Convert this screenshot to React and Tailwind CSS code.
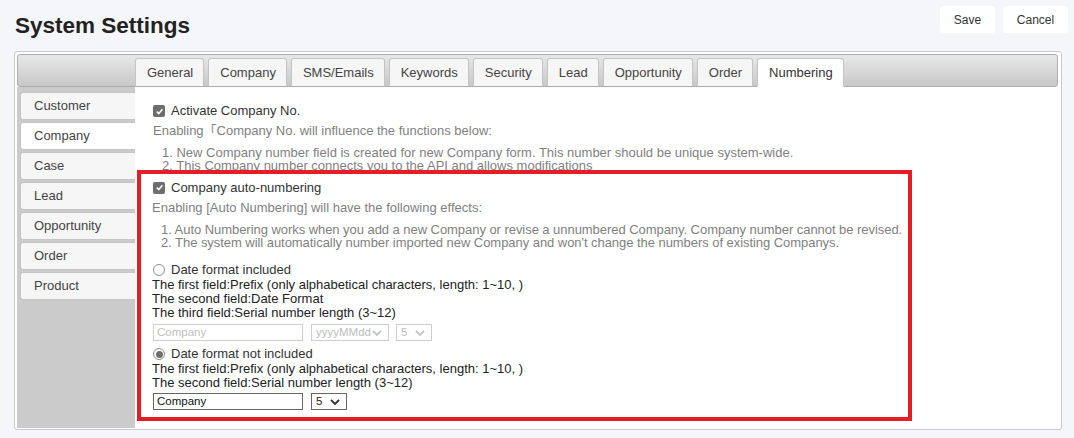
import React from "react";

const tabs = ["General", "Company", "SMS/Emails", "Keywords", "Security", "Lead", "Opportunity", "Order", "Numbering"];
const sideItems = ["Customer", "Company", "Case", "Lead", "Opportunity", "Order", "Product"];

const CheckBox = () => (
  <span className="flex h-[12px] w-[12px] items-center justify-center rounded-[2px] bg-[#6e6e6e]">
    <svg width="9" height="9" viewBox="0 0 10 10">
      <polyline points="2,5.2 4.2,7.4 8.2,2.6" fill="none" stroke="#fff" strokeWidth="1.8" />
    </svg>
  </span>
);

const Radio = ({ checked }) => (
  <span className="flex h-[12px] w-[12px] items-center justify-center rounded-full border border-[#8d8d8d] bg-white">
    {checked && <span className="h-[7px] w-[7px] rounded-full bg-[#6e6e6e]" />}
  </span>
);

const Chevron = ({ color }) => (
  <svg width="10" height="6" viewBox="0 0 10 6">
    <polyline points="1,1 5,5 9,1" fill="none" stroke={color} strokeWidth="1.8" />
  </svg>
);

const Select = ({ value, width, disabled }) => (
  <div
    className={`flex h-[17px] items-center justify-between border pl-[4px] pr-[6px] text-[11.5px] ${width} ${
      disabled ? "border-[#cfcfcf] text-[#bdbdbd]" : "border-[#666] text-[#222]"
    }`}
  >
    <span>{value}</span>
    <Chevron color={disabled ? "#c4c4c4" : "#333"} />
  </div>
);

const Input = ({ disabled }) => (
  <div
    className={`flex h-[17px] w-[150px] items-center border px-[3px] text-[11.5px] ${
      disabled ? "border-[#cfcfcf] text-[#c0c0c0]" : "border-[#666] text-[#111]"
    }`}
  >
    Company
  </div>
);

export default function App() {
  return (
    <div
      className="h-[438px] w-[1074px] bg-[#f5f6fa] text-[13px] text-[#333]"
      style={{ fontFamily: '"Liberation Sans", Arial, "Noto Sans CJK SC", sans-serif' }}
    >
      <div className="flex h-[51px] items-start justify-between pt-[6px] pr-[6px]">
        <h1 className="mt-[7px] ml-[15px] text-[22.5px] font-bold leading-[26px] text-[#222]">System Settings</h1>
        <div className="flex gap-[8px] text-[12px] text-[#333]">
          <button className="h-[27px] w-[55px] rounded-[3px] bg-white">Save</button>
          <button className="h-[27px] w-[65px] rounded-[3px] bg-white">Cancel</button>
        </div>
      </div>

      <div className="ml-[14px] flex h-[379px] w-[1048px] flex-col rounded-[3px] border border-[#c9c9c9] bg-white pt-[2px] pr-[3px] pb-[1px] pl-[2px]">
        <div className="flex h-[33px] items-end rounded-[3px] border border-[#adadad] bg-gradient-to-b from-[#e8e8e8] to-[#c8c8c8] pl-[117px]">
          <div className="relative -mb-[1px] flex gap-[4px]">
            {tabs.map((t) => (
              <div
                key={t}
                className={`flex h-[29px] items-center rounded-t-[3px] border border-[#c4c4c4] pr-[10px] pl-[11px] text-[13px] ${
                  t === "Numbering" ? "border-b-white bg-white text-[#333]" : "border-b-[#adadad] bg-[#f6f6f6] text-[#444]"
                }`}
              >
                {t}
              </div>
            ))}
          </div>
        </div>

        <div className="flex flex-1">
          <div className="w-[118px] bg-[#cbcbcb] pt-[5px] pl-[3px]">
            {sideItems.map((s) => (
              <div
                key={s}
                className={`mb-[2px] flex h-[28px] items-center rounded-l-[3px] border border-r-0 border-[#c4c4c4] pl-[13px] text-[13px] text-[#444] ${
                  s === "Company" ? "bg-white" : "bg-[#f6f6f6]"
                }`}
              >
                {s}
              </div>
            ))}
          </div>

          <div className="flex-1 bg-white pt-[14px] pl-[2px]">
            <div className="pl-[16px]">
              <div className="flex h-[20px] items-center gap-[6px]">
                <CheckBox />
                <span>Activate Company No.</span>
              </div>
              <div className="flex h-[20px] items-center text-[#7f7f7f]">Enabling「Company No. will influence the functions below:</div>
              <div className="mt-[5px] pl-[9px] leading-[13px] text-[#7f7f7f]">
                <div>1. New Company number field is created for new Company form. This number should be unique system-wide.</div>
                <div>2. This Company number connects you to the API and allows modifications</div>
              </div>
            </div>

            <div className="relative -mt-[2px] w-[775px] border-4 border-[#e51e25] bg-white pt-[3px] pb-[7px] pl-[12px]">
              <div className="flex h-[21px] items-center gap-[6px]">
                <CheckBox />
                <span>Company auto-numbering</span>
              </div>
              <div className="-ml-[1px] flex h-[20px] items-center text-[#7f7f7f]">
                Enabling [Auto Numbering] will have the following effects:
              </div>
              <div className="mt-[5px] pl-[8px] leading-[13px] tracking-[-0.05px] text-[#7f7f7f]">
                <div>1. Auto Numbering works when you add a new Company or revise a unnumbered Company. Company number cannot be revised.</div>
                <div>2. The system will automatically number imported new Company and won't change the numbers of existing Companys.</div>
              </div>

              <div className="mt-[13px] flex h-[16px] items-center gap-[6px]">
                <Radio />
                <span>Date format included</span>
              </div>
              <div className="-ml-[1px] leading-[14px] text-[#222]">
                <div>The first field:Prefix (only alphabetical characters, length: 1~10, )</div>
                <div>The second field:Date Format</div>
                <div>The third field:Serial number length (3~12)</div>
              </div>
              <div className="mt-[4px] flex items-center">
                <Input disabled />
                <div className="ml-[8px]">
                  <Select value="yyyyMMdd" width="w-[78px]" disabled />
                </div>
                <div className="ml-[7px]">
                  <Select value="5" width="w-[36px]" disabled />
                </div>
              </div>

              <div className="mt-[5px] flex h-[16px] items-center gap-[6px]">
                <Radio checked />
                <span>Date format not included</span>
              </div>
              <div className="-ml-[1px] leading-[14px] text-[#222]">
                <div>The first field:Prefix (only alphabetical characters, length: 1~10, )</div>
                <div>The second field:Serial number length (3~12)</div>
              </div>
              <div className="mt-[3px] flex items-center">
                <Input />
                <div className="ml-[8px]">
                  <Select value="5" width="w-[36px]" />
                </div>
              </div>
            </div>
          </div>
        </div>
      </div>
    </div>
  );
}
